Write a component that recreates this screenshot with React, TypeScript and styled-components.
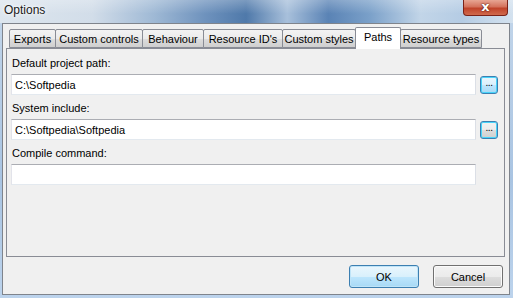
import styled, { createGlobalStyle } from 'styled-components';

const GlobalStyle = createGlobalStyle`
  html, body {
    margin: 0;
    padding: 0;
    background: #b9cfe6;
  }
  body {
    font-family: "Liberation Sans", Arial, sans-serif;
    font-size: 11px;
    color: #000;
  }
`;

const tabs = [
  { label: 'Exports', width: 47 },
  { label: 'Custom controls', width: 88 },
  { label: 'Behaviour', width: 62 },
  { label: "Resource ID's", width: 80 },
  { label: 'Custom styles', width: 74 },
  { label: 'Paths', width: 46 },
  { label: 'Resource types', width: 82 },
];

const fields = [
  { label: 'Default project path:', value: 'C:\\Softpedia', browse: true, focused: true },
  { label: 'System include:', value: 'C:\\Softpedia\\Softpedia', browse: true, focused: false },
  { label: 'Compile command:', value: '', browse: false, focused: false },
];

const App = () => {
  return (
    <Window>
      <GlobalStyle />
      <TitleBar>
        <Title>Options</Title>
        <CloseButton>x</CloseButton>
      </TitleBar>
      <Client>
        <TabStrip>
          {tabs.map((tab) => (
            <Tab key={tab.label} $width={tab.width} $active={tab.label === 'Paths'}>
              {tab.label}
            </Tab>
          ))}
        </TabStrip>
        <TabPage>
          {fields.map((field) => (
            <Field key={field.label}>
              <Label>{field.label}</Label>
              <InputRow>
                <TextBox>{field.value}</TextBox>
                {field.browse && <BrowseButton $focused={field.focused}>...</BrowseButton>}
              </InputRow>
            </Field>
          ))}
        </TabPage>
        <ButtonRow>
          <DialogButton $default>OK</DialogButton>
          <DialogButton>Cancel</DialogButton>
        </ButtonRow>
      </Client>
    </Window>
  );
};

const Window = styled.div`
  width: 513px;
  height: 298px;
  display: flex;
  flex-direction: column;
  box-sizing: border-box;
  padding: 0 3px 3px 2px;
  background: linear-gradient(180deg, #c3d6ea 0%, #a9c4e2 60%, #bcd3ec 100%);
  overflow: hidden;
`;

const TitleBar = styled.div`
  height: 23px;
  margin: 0 -3px 0 -2px;
  padding: 0 5px 0 4px;
  display: flex;
  align-items: flex-start;
  justify-content: space-between;
  background:
    linear-gradient(180deg, rgba(255, 255, 255, 0.25) 0%, rgba(255, 255, 255, 0) 60%),
    linear-gradient(90deg, #dde6ee 0%, #d2dde9 18%, #9fb9d5 30%, #6e92bd 40%, #4f79aa 48%, #a8c0db 56%,
      #5a83b5 64%, #7aa0c9 72%, #c2d5e8 82%, #b5cce4 90%, #d4e2ef 100%);
`;

const Title = styled.div`
  font-size: 12px;
  line-height: 15px;
  margin-top: 3px;
  color: #1a1a1a;
  text-shadow: 0 0 6px #ffffff, 0 0 3px #ffffff;
`;

const CloseButton = styled.div`
  width: 45px;
  height: 16px;
  box-sizing: border-box;
  border: 1px solid #7a2218;
  border-top: none;
  border-radius: 0 0 4px 4px;
  background: linear-gradient(180deg, #e7a593 0%, #d4725c 45%, #c0432a 55%, #d06a4d 100%);
  color: #ffffff;
  font-family: "DejaVu Sans", sans-serif;
  font-weight: bold;
  font-size: 13px;
  line-height: 14px;
  text-align: center;
  text-shadow: 0 0 2px #5a1a10, 0 0 1px #5a1a10;
`;

const Client = styled.div`
  flex: 1;
  display: flex;
  flex-direction: column;
  box-sizing: border-box;
  border: 1px solid #7f848c;
  background: #f0f0f0;
  padding: 2px 4px 0 3px;
`;

const TabStrip = styled.div`
  display: flex;
  align-items: flex-end;
  height: 22px;
  padding-left: 3px;
  position: relative;
  z-index: 1;
`;

const Tab = styled.div<{ $width: number; $active?: boolean }>`
  flex: none;
  width: ${(p) => p.$width}px;
  height: ${(p) => (p.$active ? 22 : 19)}px;
  box-sizing: border-box;
  margin-right: -1px;
  border: 1px solid #898c95;
  border-bottom: ${(p) => (p.$active ? 'none' : '1px solid #898c95')};
  border-radius: 2px 2px 0 0;
  background: ${(p) =>
    p.$active ? '#ffffff' : 'linear-gradient(180deg, #f3f3f3 0%, #ebebeb 50%, #dddddd 52%, #cfcfcf 100%)'};
  display: flex;
  justify-content: center;
  align-items: ${(p) => (p.$active ? 'flex-start' : 'center')};
  padding-top: ${(p) => (p.$active ? 3 : 0)}px;
  margin-bottom: ${(p) => (p.$active ? -1 : 0)}px;
  white-space: nowrap;
  font-size: 11px;
`;

const TabPage = styled.div`
  height: 209px;
  box-sizing: border-box;
  border: 1px solid #898c95;
  background: #f0f0f0;
  padding: 7px 0 0 4px;
  display: flex;
  flex-direction: column;
  gap: 6px;
`;

const Field = styled.div`
  display: flex;
  flex-direction: column;
  gap: 4px;
`;

const Label = styled.div`
  padding-left: 1px;
  line-height: 14px;
`;

const InputRow = styled.div`
  display: flex;
  align-items: center;
  gap: 4px;
`;

const TextBox = styled.div`
  width: 465px;
  height: 21px;
  box-sizing: border-box;
  border: 1px solid #abadb3;
  border-color: #abadb3 #dbdfe6 #e3e9ef #e2e3ea;
  background: #ffffff;
  padding: 3px 3px 0 3px;
  line-height: 14px;
`;

const BrowseButton = styled.div<{ $focused?: boolean }>`
  width: 18px;
  height: 18px;
  box-sizing: border-box;
  border: 1px solid #3c7fb1;
  border-radius: 3px;
  box-shadow: inset 0 0 0 1px #48d4fa;
  background: ${(p) =>
    p.$focused
      ? 'linear-gradient(180deg, #eaf6fd 0%, #d9f0fc 50%, #bee6fd 51%, #a7d9f5 100%)'
      : 'linear-gradient(180deg, #f2f2f2 0%, #ebebeb 50%, #dddddd 51%, #cfcfcf 100%)'};
  font-size: 10px;
  line-height: 12px;
  text-align: center;
  letter-spacing: -0.5px;
`;

const ButtonRow = styled.div`
  flex: 1;
  display: flex;
  justify-content: flex-end;
  align-items: flex-start;
  gap: 14px;
  padding: 8px 2px 0 0;
`;

const DialogButton = styled.div<{ $default?: boolean }>`
  width: 70px;
  height: 23px;
  box-sizing: border-box;
  border: 1px solid ${(p) => (p.$default ? '#3c7fb1' : '#707070')};
  border-radius: 3px;
  box-shadow: inset 0 0 0 1px ${(p) => (p.$default ? '#bfe4f8' : '#fbfbfb')};
  background: ${(p) =>
    p.$default
      ? 'linear-gradient(180deg, #eaf6fd 0%, #d9f0fc 50%, #bee6fd 51%, #a7d9f5 100%)'
      : 'linear-gradient(180deg, #f2f2f2 0%, #ebebeb 50%, #dddddd 51%, #cfcfcf 100%)'};
  display: flex;
  align-items: center;
  justify-content: center;
  font-size: 11px;
`;

export default App;
